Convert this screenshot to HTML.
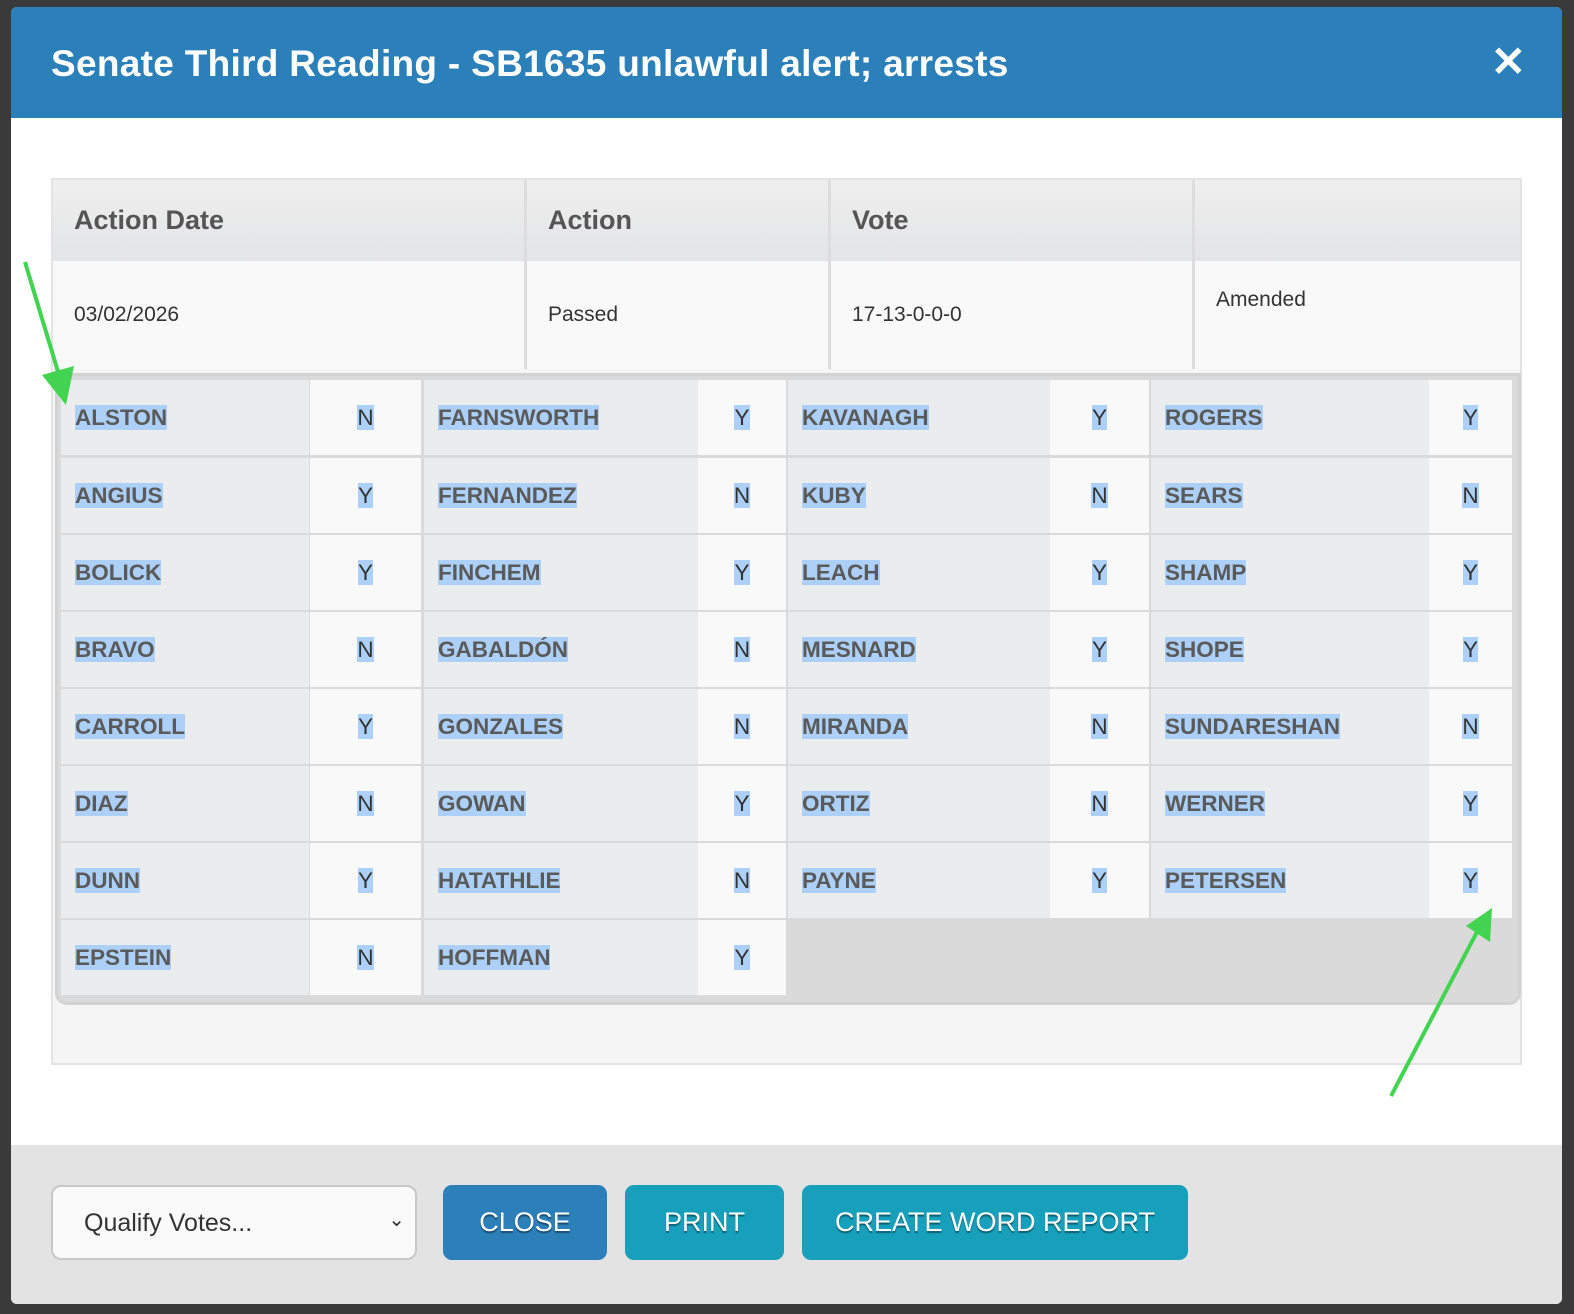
<!DOCTYPE html>
<html><head><meta charset="utf-8"><style>
*{box-sizing:border-box;margin:0;padding:0}
body{width:1574px;height:1314px;background:#3a3a3a;font-family:"Liberation Sans",sans-serif;position:relative;overflow:hidden}
.modal{position:absolute;left:11px;top:7px;width:1551px;height:1297px;background:#fff;border-radius:6px;overflow:hidden}
.hdr{position:absolute;left:0;top:0;width:100%;height:111px;background:#2c80b9;color:#fff;font-weight:bold;font-size:37px;padding:36px 0 0 40px;letter-spacing:0.3px}
.abs{position:absolute}
.th{position:absolute;top:173px;height:81px;background:linear-gradient(#efefef,#e3e4e6);color:#555;font-weight:bold;font-size:27px;padding:25px 0 0 21px;border-right:3px solid #ddd}
.td{position:absolute;top:254px;height:108px;background:#f9f9f9;color:#333;font-size:21px;padding:0 0 0 21px;border-right:3px solid #ddd}
.grid{position:absolute;left:44px;top:366px;width:1466px;height:632px;background:#dadada;border-radius:0 0 12px 12px;border:3px solid #d2d2d2}
.c{position:absolute;height:75px;font-weight:bold;font-size:22.5px;color:#5a5a5a;padding-top:25px}
.c span{background:#acd0f7}
.n{background:#ebecee;padding-left:14px}
.v{background:#f9f9f9;text-align:center;color:#333;font-weight:normal}
.foot{position:absolute;left:0;top:1138px;width:100%;height:160px;background:#e3e3e3}
.btn{position:absolute;top:1178px;height:75px;border-radius:9px;color:#fff;font-size:27px;text-align:center;padding-top:22px;text-shadow:0 2px 1px rgba(0,0,0,.4)}
</style></head><body>
<div class="modal">
<div class="hdr">Senate Third Reading - SB1635 unlawful alert; arrests</div>
<div class="abs" style="right:36px;top:30px;font-size:42px;color:#fff;font-weight:bold">✕</div>
<div class="abs" style="left:40px;top:171px;width:1471px;height:887px;background:#f5f5f5;border:2px solid #e3e3e3"></div>
<div class="th" style="left:42px;width:474px">Action Date</div>
<div class="th" style="left:516px;width:304px">Action</div>
<div class="th" style="left:820px;width:364px">Vote</div>
<div class="th" style="left:1184px;width:325px;border-right:0"></div>
<div class="td" style="left:42px;width:474px;padding-top:42px">03/02/2026</div>
<div class="td" style="left:516px;width:304px;padding-top:42px">Passed</div>
<div class="td" style="left:820px;width:364px;padding-top:42px">17-13-0-0-0</div>
<div class="td" style="left:1184px;width:325px;border-right:0;padding-top:27px">Amended</div>
<div class="grid"></div>
<div id="g"></div>
<div class="foot"></div>
<div class="abs" style="left:40px;top:1178px;width:366px;height:75px;background:#fafafa;border:2px solid #c8c8c8;border-radius:10px;font-size:25px;color:#333;padding:22px 0 0 31px">Qualify Votes...<span style="position:absolute;right:10px;top:20px;font-size:20px">&#8964;</span></div>
<div class="btn" style="left:432px;width:164px;background:#2c80b9">CLOSE</div>
<div class="btn" style="left:614px;width:159px;background:#16a0bb">PRINT</div>
<div class="btn" style="left:791px;width:386px;background:#16a0bb">CREATE WORD REPORT</div>
</div>
<svg class="abs" style="left:0;top:0" width="1574" height="1314">
<line x1="25" y1="262" x2="62" y2="385" stroke="#42d350" stroke-width="4"/>
<polygon points="42,375 74,366 66,405" fill="#42d350"/>
<line x1="1391" y1="1096" x2="1478" y2="930" stroke="#42d350" stroke-width="4"/>
<polygon points="1466,926 1492,908 1490,942" fill="#42d350"/>
</svg>
<script>
var cols=[[50,248],[299,111],[413,274],[687,88],[777,262],[1039,99],[1140,278],[1418,83]];
var tops=[373,451,528,605,682,759,836,913];
var d=[["ALSTON","N","FARNSWORTH","Y","KAVANAGH","Y","ROGERS","Y"],["ANGIUS","Y","FERNANDEZ","N","KUBY","N","SEARS","N"],["BOLICK","Y","FINCHEM","Y","LEACH","Y","SHAMP","Y"],["BRAVO","N","GABALDÓN","N","MESNARD","Y","SHOPE","Y"],["CARROLL","Y","GONZALES","N","MIRANDA","N","SUNDARESHAN","N"],["DIAZ","N","GOWAN","Y","ORTIZ","N","WERNER","Y"],["DUNN","Y","HATATHLIE","N","PAYNE","Y","PETERSEN","Y"],["EPSTEIN","N","HOFFMAN","Y"]];
var h="";d.forEach(function(r,i){r.forEach(function(t,j){h+='<div class="c '+(j%2?'v':'n')+'" style="left:'+cols[j][0]+'px;width:'+cols[j][1]+'px;top:'+tops[i]+'px"><span>'+t+'</span></div>';});});
document.getElementById("g").innerHTML=h;
</script>
</body></html>
